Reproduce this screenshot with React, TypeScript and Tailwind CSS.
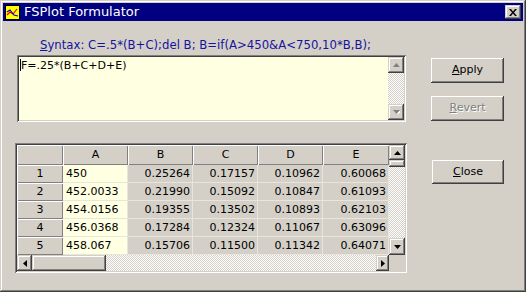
import React from 'react';

const rows = [
  ['1', '450', '0.25264', '0.17157', '0.10962', '0.60068'],
  ['2', '452.0033', '0.21990', '0.15092', '0.10847', '0.61093'],
  ['3', '454.0156', '0.19355', '0.13502', '0.10893', '0.62103'],
  ['4', '456.0368', '0.17284', '0.12324', '0.11067', '0.63096'],
  ['5', '458.067', '0.15706', '0.11500', '0.11342', '0.64071'],
];

const cols = ['', 'A', 'B', 'C', 'D', 'E'];
const colW = ['w-[46px]', 'w-[65px]', 'w-[65px]', 'w-[65px]', 'w-[65px]', 'w-[66px]'];

const raised =
  'bg-[#d4d0c8] shadow-[inset_-1px_-1px_#404040,inset_1px_1px_#d4d0c8,inset_-2px_-2px_#808080,inset_2px_2px_#fff]';
const btn =
  'bg-[#d4d0c8] shadow-[inset_-1px_-1px_#404040,inset_1px_1px_#fff,inset_-2px_-2px_#808080] flex items-center justify-center text-[11px]';
const sunken =
  'shadow-[inset_1px_1px_#808080,inset_-1px_-1px_#fff,inset_2px_2px_#404040,inset_-2px_-2px_#d4d0c8] p-[2px]';
const checker =
  'bg-[repeating-conic-gradient(#d4d0c8_0_25%,#ffffff_0_50%)] bg-size-[2px_2px]';

function Arrow({ dir, gray }: { dir: 'up' | 'down' | 'left' | 'right'; gray?: boolean }) {
  const fill = gray ? '#808080' : '#000';
  const pts = {
    up: '3.5,0 7,4 0,4',
    down: '0,0 7,0 3.5,4',
    left: '4,0 4,7 0,3.5',
    right: '0,0 4,3.5 0,7',
  }[dir];
  const horiz = dir === 'left' || dir === 'right';
  return (
    <svg width={horiz ? 4 : 7} height={horiz ? 7 : 4} viewBox={horiz ? '0 0 4 7' : '0 0 7 4'}>
      {gray && <polygon points={pts} fill="#fff" transform="translate(1,1)" />}
      <polygon points={pts} fill={fill} />
    </svg>
  );
}

function TitleBar() {
  return (
    <div className="h-[18px] bg-[#000080] flex items-center shrink-0">
      <svg className="ml-[2px]" width="15" height="15" viewBox="0 0 15 15">
        <rect x="0.5" y="0.5" width="14" height="14" fill="#ffff00" stroke="#000" />
        <polyline points="2,10 5,7 8,9 12,4" fill="none" stroke="#e00000" strokeWidth="1.2" />
        <polyline points="2,7 5,5 9,10 13,11" fill="none" stroke="#0000e0" strokeWidth="1.2" />
      </svg>
      <span className="ml-[4px] text-white text-[13px] leading-[18px]">FSPlot Formulator</span>
      <div className={`ml-auto mr-[2px] w-[16px] h-[14px] ${raised} flex items-center justify-center`}>
        <svg width="8" height="7" viewBox="0 0 8 7">
          <path d="M0 0h2l2 2.5 2-2.5h2l-3 3.5 3 3.5h-2l-2-2.5-2 2.5h-2l3-3.5z" fill="#000" />
        </svg>
      </div>
    </div>
  );
}

function Editor() {
  return (
    <div className={`ml-[2px] mt-[3px] w-[389px] h-[67px] ${sunken}`}>
      <div className="flex h-full">
        <div className="flex-1 bg-[#ffffe1] pl-[1px] pt-[2px] text-[11px] leading-[14px] text-black whitespace-nowrap">
          <span className="inline-block w-px h-[12px] bg-black align-[-2px]" />
          F=.25*(B+C+D+E)
        </div>
        <div className="w-[16px] flex flex-col">
          <div className={`h-[16px] ${raised} flex items-center justify-center`}>
            <Arrow dir="up" gray />
          </div>
          <div className={`flex-1 ${checker}`} />
          <div className={`h-[16px] ${raised} flex items-center justify-center`}>
            <Arrow dir="down" gray />
          </div>
        </div>
      </div>
    </div>
  );
}

function Grid() {
  const head = 'bg-[#d4d0c8] shadow-[inset_1px_1px_#fff,inset_-1px_-1px_#808080] flex items-center justify-center';
  return (
    <div className={`mt-[21px] w-[392px] h-[130px] bg-[#d4d0c8] ${sunken}`}>
      <div className="flex flex-col h-full text-[11px] text-black">
        <div className="flex h-[110px]">
          <div className="w-[372px] flex flex-col">
            <div className="flex h-[20px]">
              {cols.map((c, i) => (
                <div key={i} className={`${colW[i]} ${head}`}>{c}</div>
              ))}
            </div>
            {rows.map((r) => (
              <div key={r[0]} className="flex h-[18px]">
                {r.map((v, i) =>
                  i === 0 ? (
                    <div key={i} className={`${colW[i]} ${head}`}>{v}</div>
                  ) : (
                    <div
                      key={i}
                      className={`${colW[i]} border-r border-b border-[#e8e5de] leading-[17px] whitespace-nowrap ${
                        i === 1 ? 'bg-[#ffffe1] text-left pl-[3px]' : 'text-right pr-[2px]'
                      }`}
                    >
                      {v}
                    </div>
                  )
                )}
              </div>
            ))}
          </div>
          <div className="w-[16px] flex flex-col">
            <div className={`h-[15px] ${raised} flex items-center justify-center`}>
              <Arrow dir="up" />
            </div>
            <div className={`h-[7px] ${raised}`} />
            <div className={`flex-1 ${checker}`} />
            <div className={`h-[17px] ${raised} flex items-center justify-center`}>
              <Arrow dir="down" />
            </div>
          </div>
        </div>
        <div className="flex h-[16px]">
          <div className="w-[372px] flex">
            <div className={`w-[15px] ${raised} flex items-center justify-center`}>
              <Arrow dir="left" />
            </div>
            <div className={`w-[74px] ${raised}`} />
            <div className={`flex-1 ${checker}`} />
            <div className={`w-[13px] ${raised} flex items-center justify-center`}>
              <Arrow dir="right" />
            </div>
          </div>
          <div className="w-[16px] bg-[#d4d0c8]" />
        </div>
      </div>
    </div>
  );
}

export default function App() {
  return (
    <div className="w-[526px] h-[292px] bg-[#d4d0c8] p-[3px] flex flex-col [font-family:'DejaVu_Sans',Verdana,sans-serif] shadow-[inset_-1px_-1px_#404040,inset_1px_1px_#d4d0c8,inset_-2px_-2px_#808080,inset_2px_2px_#fff]">
      <TitleBar />
      <div className="flex pl-[12px]">
        <div className="w-[392px] flex flex-col">
          <div className="mt-[17px] ml-[25px] h-[14px] text-[11.7px] leading-[14px] text-[#1414a0] whitespace-nowrap">
            <span className="underline">S</span>yntax: C=.5*(B+C);del B; B=if(A&gt;450&amp;A&lt;750,10*B,B);
          </div>
          <Editor />
          <Grid />
        </div>
        <div className="ml-[24px] w-[73px] flex flex-col">
          <div className={`mt-[37px] h-[25px] ${btn} text-black`}>
            <span><span className="underline">A</span>pply</span>
          </div>
          <div className={`mt-[13px] h-[25px] ${btn} text-[#808080] [text-shadow:1px_1px_0_#fff]`}>
            <span><span className="underline">R</span>evert</span>
          </div>
          <div className={`mt-[39px] ml-[1px] h-[24px] ${btn} text-black`}>
            <span><span className="underline">C</span>lose</span>
          </div>
        </div>
      </div>
    </div>
  );
}
